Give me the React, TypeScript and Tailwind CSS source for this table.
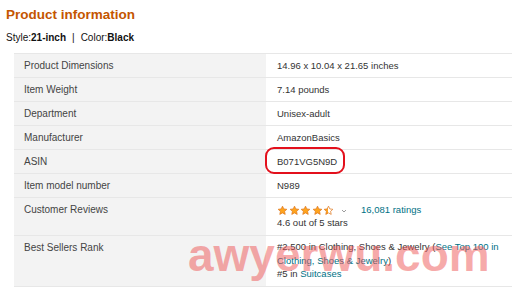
import type { ReactNode } from "react";

type Row = {
  label: string;
  value: ReactNode;
  tall?: "reviews" | "rank";
};

const starPoints =
  "12,2.5 14.9,8.6 21.5,9.4 16.6,13.9 17.9,20.5 12,17.2 6.1,20.5 7.4,13.9 2.5,9.4 9.1,8.6";

function Star({ half }: { half?: boolean }) {
  return (
    <svg width="11" height="11" viewBox="0 0 24 24" className="block">
      {half && (
        <defs>
          <linearGradient id="halfFill" x1="0" x2="1" y1="0" y2="0">
            <stop offset="50%" stopColor="#ffa41c" />
            <stop offset="50%" stopColor="#ffffff" />
          </linearGradient>
        </defs>
      )}
      <polygon
        points={starPoints}
        fill={half ? "url(#halfFill)" : "#ffa41c"}
        stroke="#de7921"
        strokeWidth="1.6"
        strokeLinejoin="round"
      />
    </svg>
  );
}

function Reviews() {
  return (
    <div>
      <div className="flex items-center h-[12px]">
        <div className="flex gap-[0.5px]">
          <Star />
          <Star />
          <Star />
          <Star />
          <Star half />
        </div>
        <svg width="8" height="8" viewBox="0 0 24 24" className="ml-[6px] mt-[1px]">
          <path d="M6 9l6 6 6-6" fill="none" stroke="#888" strokeWidth="2.5" />
        </svg>
        <span className="ml-[13px] text-[#007185]">16,081 ratings</span>
      </div>
      <div className="leading-[14px]">4.6 out of 5 stars</div>
    </div>
  );
}

function Rank() {
  return (
    <div className="leading-[13.5px]">
      <div>
        #2,500 in Clothing, Shoes &amp; Jewelry (
        <span className="text-[#007185]">See Top 100 in Clothing, Shoes &amp; Jewelry</span>)
      </div>
      <div>
        #5 in <span className="text-[#007185]">Suitcases</span>
      </div>
    </div>
  );
}

const rows: Row[] = [
  { label: "Product Dimensions", value: "14.96 x 10.04 x 21.65 inches" },
  { label: "Item Weight", value: "7.14 pounds" },
  { label: "Department", value: "Unisex-adult" },
  { label: "Manufacturer", value: "AmazonBasics" },
  {
    label: "ASIN",
    value: (
      <span className="relative block">
        B071VG5N9D
        <span className="absolute left-[-12px] top-[-9px] w-[80px] h-[27px] border-2 border-[#e3101c] rounded-[9px]" />
      </span>
    ),
  },
  { label: "Item model number", value: "N989" },
  { label: "Customer Reviews", value: <Reviews />, tall: "reviews" },
  { label: "Best Sellers Rank", value: <Rank />, tall: "rank" },
];

export default function App() {
  return (
    <div className="relative w-[512px] h-[292px] overflow-hidden bg-white font-['Liberation_Sans',Arial,sans-serif]">
      <h1 className="pl-[6px] pt-[7px] text-[13.5px] leading-[16px] font-bold text-[#c45500]">
        Product information
      </h1>
      <div className="pl-[6px] mt-[9px] text-[10px] leading-[12px] text-[#111]">
        Style:<b>21-inch</b>
        <span className="mx-[6px]">|</span>
        Color:<b>Black</b>
      </div>

      {/* spec table */}
      <div className="ml-[14px] mt-[9px] w-[498px] border-t border-[#e7e7e7] text-[9.5px]">
        {rows.map((row, index) => {
          const pad =
            row.tall === "rank"
              ? "pt-[4px] pb-[5px]"
              : "pt-[6px] pb-[5px]";
          return (
            <div key={index} className="flex border-b border-[#e7e7e7]">
              <div className={`w-[252px] shrink-0 bg-[#f3f3f3] pl-[10px] text-[#444] text-[10px] leading-[12px] ${row.tall ? "pt-[6px]" : pad}`}>
                {row.label}
              </div>
              <div
                className={`flex-1 pl-[11px] pr-[10px] text-[#333] leading-[12px] ${
                  row.tall === "reviews" ? "pt-[6px] pb-[5px]" : pad
                }`}
              >
                {row.value}
              </div>
            </div>
          );
        })}
      </div>

      <div className="absolute left-[188px] top-[232px] text-[46px] leading-[46px] font-bold text-[rgba(238,86,86,0.5)] pointer-events-none select-none">
        awyerwu.com
      </div>
    </div>
  );
}
